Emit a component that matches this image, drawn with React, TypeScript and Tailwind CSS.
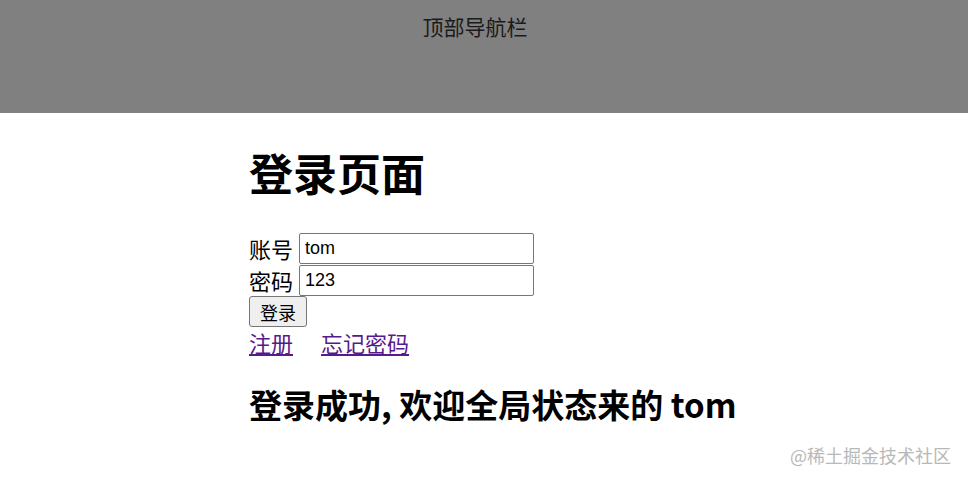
import React from 'react';

const cjk = { fontFamily: '"Microsoft YaHei", "Noto Sans CJK SC", sans-serif' };

const App = () => {
  return (
    <div
      className="relative min-h-[484px] w-full bg-white text-black"
      style={cjk}
    >
      {/* Top nav */}
      <div className="h-[113px] bg-[#808080] flex justify-center pr-[18px] pt-[11px]">
        <span className="text-[21px] leading-[30px] text-[#1a1a1a]">顶部导航栏</span>
      </div>

      <div className="pl-[249px]">
        <h1 className="mt-[29px] mb-[30px] text-[44px] leading-[60px] font-bold">登录页面</h1>

        <div className="flex items-center h-[32px]">
          <span className="text-[22px] leading-[32px] mr-[6px]">账号</span>
          <input
            className="w-[235px] h-[31px] border border-[#767676] rounded-[2px] px-[5px] text-[18px] outline-none"
            style={{ fontFamily: '"Liberation Sans", Arial, sans-serif' }}
            defaultValue="tom"
          />
        </div>
        <div className="flex items-center h-[32px]">
          <span className="text-[22px] leading-[32px] mr-[6px]">密码</span>
          <input
            className="w-[235px] h-[31px] border border-[#767676] rounded-[2px] px-[5px] text-[18px] outline-none"
            style={{ fontFamily: '"Liberation Sans", Arial, sans-serif' }}
            defaultValue="123"
          />
        </div>
        <button className="w-[58px] h-[31px] bg-[#efefef] border border-[#767676] rounded-[3px] text-[18px] leading-none">
          登录
        </button>
        <div className="flex h-[30px] items-center text-[22px] text-[#551a8b]">
          <a href="#" className="underline">注册</a>
          <a href="#" className="underline ml-[28px]">忘记密码</a>
        </div>

        <h2 className="mt-[25px] text-[33px] leading-[44px] font-bold">
          登录成功, 欢迎全局状态来的 tom
        </h2>
      </div>

      {/* Watermark */}
      <div className="absolute right-[17px] bottom-[15px] text-[18px] text-[#b8b8b8]">
        @稀土掘金技术社区
      </div>
    </div>
  );
};

export default App;
